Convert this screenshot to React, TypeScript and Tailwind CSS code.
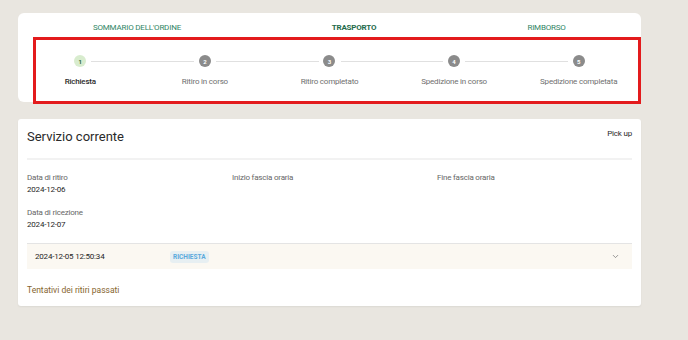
import { ChevronDown } from "lucide-react";

const tabs = [
  { label: "SOMMARIO DELL'ORDINE", width: "w-[238px]", active: false },
  { label: "TRASPORTO", width: "w-[196px]", active: true },
  { label: "RIMBORSO", width: "w-[189px]", active: false },
];

const steps = [
  "Richiesta",
  "Ritiro in corso",
  "Ritiro completato",
  "Spedizione in corso",
  "Spedizione completata",
];

function Field({ label, value }: { label: string; value?: string }) {
  return (
    <div className="flex flex-col">
      <span className="text-[8px] leading-[10px] tracking-[-0.2px] text-[#666]">{label}</span>
      {value && (
        <span className="mt-[2px] text-[8px] leading-[10px] tracking-[-0.2px] text-[#1f1f1f]">
          {value}
        </span>
      )}
    </div>
  );
}

export default function App() {
  return (
    <div className="min-h-[340px] w-[688px] bg-[#e9e6e0] pt-[13px] font-['Roboto',sans-serif]">
      {/* Order card with tabs + stepper */}
      <div className="relative ml-[18px] h-[89px] w-[623px] rounded-[6px] bg-white">
        <div className="flex h-[26px] items-center pt-[3px]">
          {tabs.map((t) => (
            <div key={t.label} className={`${t.width} flex justify-center`}>
              <span
                className={
                  t.active
                    ? "text-[8px] font-bold tracking-[-0.2px] text-[#1f6b4b]"
                    : "text-[8px] tracking-[-0.2px] text-[#2f8565]"
                }
              >
                {t.label}
              </span>
            </div>
          ))}
        </div>

        <div className="grid grid-cols-5 pt-[16px]">
          {steps.map((s, i) => (
            <div key={s} className="relative flex flex-col items-center">
              {i > 0 && (
                <div className="absolute left-[calc(-50%+11px)] right-[calc(50%+11px)] top-[6px] h-px bg-[#e0e0e0]" />
              )}
              <div
                className={
                  i === 0
                    ? "flex h-[12px] w-[12px] items-center justify-center rounded-full bg-[#d8ecce] text-[6px] font-bold text-[#2d6a3c]"
                    : "flex h-[12px] w-[12px] items-center justify-center rounded-full bg-[#8b8b8b] text-[6px] font-bold text-white"
                }
              >
                {i + 1}
              </div>
              <span
                className={
                  i === 0
                    ? "mt-[10px] text-[8px] font-medium leading-[10px] tracking-[-0.2px] text-[#2b2b2b]"
                    : "mt-[10px] text-[8px] leading-[10px] tracking-[-0.2px] text-[#6f6f6f]"
                }
              >
                {s}
              </span>
            </div>
          ))}
        </div>

        {/* highlight frame */}
        <div className="pointer-events-none absolute left-[15px] top-[24px] h-[67px] w-[608px] border-[3px] border-[#e31b1d]" />
      </div>

      {/* Current service card */}
      <div className="ml-[18px] mt-[17px] w-[623px] rounded-[3px] bg-white px-[9px] pb-[10px] pt-[10px] shadow-[0_1px_2px_rgba(0,0,0,0.06)]">
        <div className="flex items-start justify-between">
          <h2 className="text-[13px] leading-[16px] text-[#2a2a2a]">Servizio corrente</h2>
          <span className="text-[8px] leading-[10px] tracking-[-0.2px] text-[#2a2a2a]">Pick up</span>
        </div>

        <div className="mt-[13px] h-[2px] bg-[#f2f2f2]" />

        <div className="mt-[13px] grid grid-cols-[205px_205px_1fr]">
          <Field label="Data di ritiro" value="2024-12-06" />
          <Field label="Inizio fascia oraria" />
          <Field label="Fine fascia oraria" />
        </div>

        <div className="mt-[13px]">
          <Field label="Data di ricezione" value="2024-12-07" />
        </div>

        <div className="mt-[13px] flex h-[26px] items-center border-t border-[#e4e4e4] bg-[#fbf8f2] pl-[8px] pr-[12px]">
          <span className="w-[135px] text-[8px] tracking-[-0.2px] text-[#262626]">2024-12-05 12:50:34</span>
          <span className="rounded-[3px] bg-[#e7eff2] px-[3px] py-[2px] text-[6.5px] font-bold leading-[8px] text-[#5aa9dc]">
            RICHIESTA
          </span>
          <ChevronDown className="ml-auto h-[9px] w-[9px] text-[#777]" strokeWidth={2} />
        </div>

        <p className="mt-[15px] text-[8.5px] leading-[12px] text-[#86652f]">Tentativi dei ritiri passati</p>
      </div>
    </div>
  );
}
